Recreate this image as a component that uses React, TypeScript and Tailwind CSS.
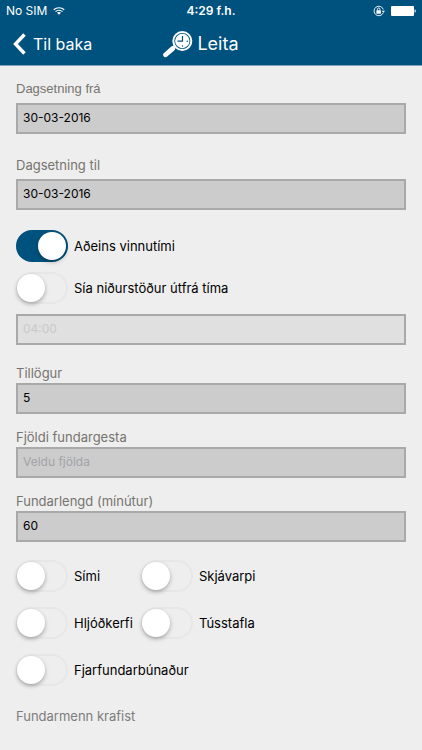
import React, { useState } from 'react';

function WifiIcon() {
  return (
    <svg className="w-3 h-2" viewBox="0 0 24 16" fill="none" stroke="white" strokeWidth="2.4" aria-hidden="true">
      <path d="M1.5 5.5C7.5 .2 16.5 .2 22.5 5.5" />
      <path d="M5 9.3c4-3.6 10-3.6 14 0" />
      <path d="M12 15.5l-4-4c2.2-2 5.8-2 8 0z" fill="white" stroke="none" />
    </svg>
  );
}

function RotationLockIcon() {
  return (
    <svg className="w-3 h-3" viewBox="0 0 24 24" fill="none" stroke="white" aria-hidden="true">
      <path d="M20.5 15.5A9.5 9.5 0 1 1 20.7 9" strokeWidth="1.8" />
      <path d="M17.5 11.5h6.5l-3.2 4.2z" fill="white" stroke="none" />
      <rect x="6.8" y="10.5" width="9" height="7" rx="1" fill="white" stroke="none" />
      <path d="M8.8 11V8.5a2.5 2.5 0 0 1 5 0V11" strokeWidth="1.8" />
    </svg>
  );
}

function BatteryIcon() {
  return (
    <svg className="w-[25px] h-[10px]" viewBox="0 0 25 10" fill="white" aria-hidden="true">
      <rect width="23" height="10" rx="1" />
      <path d="M23.6 3.2c1.6.5 1.6 3.1 0 3.6z" />
    </svg>
  );
}

function SearchClockIcon() {
  return (
    <svg className="w-[30px] h-7" viewBox="0 0 30 28" fill="none" stroke="white" aria-hidden="true">
      <path d="M2.6 24.8L9.6 18.6" strokeWidth="4.8" strokeLinecap="round" />
      <path d="M9 19L12.5 16" strokeWidth="3" />
      <circle cx="19.3" cy="11" r="9" strokeWidth="2" />
      <circle cx="19.3" cy="11" r="7.2" fill="white" stroke="none" />
      <path d="M19.5 6v5.200h-5" stroke="#00527e" strokeWidth="1.200" />
      <g fill="#00527e" stroke="none">
        <circle cx="24.3" cy="11.2" r=".7" />
        <circle cx="19.5" cy="16" r=".7" />
      </g>
    </svg>
  );
}

type FieldProps = {
  id: string;
  label: string;
  value?: string;
  placeholder?: string;
  className?: string;
  labelClassName?: string;
};

function Field({ id, label, value, placeholder, className, labelClassName }: FieldProps) {
  return (
    <div className={`flex flex-col ${className ?? ''}`}>
      <label htmlFor={id} className={`leading-5 text-[#76746f] ${labelClassName ?? 'text-[13px]'}`}>{label}</label>
      <input
        id={id}
        type="text"
        defaultValue={value}
        placeholder={placeholder}
        className="w-full h-[31px] border-2 border-[#a9a9a9] bg-[#ccc] px-[5px] pb-0.5 text-xs text-black placeholder:text-[#a3a3a8] outline-none"
      />
    </div>
  );
}

function Toggle({ label, defaultOn = false }: { label: string; defaultOn?: boolean }) {
  const [on, setOn] = useState(defaultOn);
  return (
    <label className="flex items-center gap-1.5 h-8 text-[13px] text-black whitespace-nowrap cursor-pointer">
      <input
        type="checkbox"
        role="switch"
        checked={on}
        onChange={() => setOn(!on)}
        className="appearance-none shrink-0 w-[52px] h-8 rounded-full border-2 border-[#e7e7e7] bg-[#eee] checked:border-[#00527e] checked:bg-[#00527e] before:block before:size-7 before:-ml-px before:rounded-full before:bg-white before:shadow-[0_2px_4px_rgba(0,0,0,0.3)] checked:before:translate-x-[21px] before:transition-transform cursor-pointer"
      />
      <span className="pt-0.5">{label}</span>
    </label>
  );
}

export default function App() {
  return (
    <div className="min-h-screen bg-[#eee] font-['Inter','Liberation_Sans',sans-serif]">
      <header className="bg-[#00527e] border-b border-[#7fa3ba] text-white">
        <div className="grid grid-cols-3 items-center h-[22px] px-1.5 text-xs">
          <div className="flex items-center gap-1.5">
            <span>No SIM</span>
            <WifiIcon />
          </div>
          <span className="text-center font-semibold">4:29 f.h.</span>
          <div className="flex items-center justify-end gap-1.5">
            <RotationLockIcon />
            <BatteryIcon />
          </div>
        </div>
        <div className="grid grid-cols-[1fr_auto_1fr] items-center h-[43px] px-3">
          <button type="button" className="flex items-center gap-1.5 justify-self-start text-base cursor-pointer">
            <svg className="w-[15px] h-[22px]" viewBox="0 0 15 22" fill="none" stroke="white" strokeWidth="3.4" aria-hidden="true">
              <path d="M12.500 1.500L3.500 11L12.500 20.500" />
            </svg>
            Til baka
          </button>
          <h1 className="flex items-center gap-1 pr-5 text-lg">
            <SearchClockIcon />
            Leita
          </h1>
        </div>
      </header>

      <form className="px-4 pt-[13px] pb-6">
        <Field id="from" label="Dagsetning frá" value="30-03-2016" className="gap-1" labelClassName="text-[13px] font-['Liberation_Sans',sans-serif]" />
        <Field id="to" label="Dagsetning til" value="30-03-2016" className="gap-1 mt-[21px]" />

        <div className="flex flex-col gap-2.5 mt-5">
          <Toggle label="Aðeins vinnutími" defaultOn />
          <Toggle label="Sía niðurstöður útfrá tíma" />
          <input
            type="text"
            disabled
            aria-label="Tími"
            defaultValue="04:00"
            className="w-full h-[31px] border-2 border-[#a9a9a9] bg-[#e0e0e0] px-[5px] pb-0.5 text-xs text-[#c9c9cb]"
          />
        </div>

        <div className="flex flex-col gap-[13px] mt-[18px]">
          <Field id="suggestions" label="Tillögur" value="5" />
          <Field id="guests" label="Fjöldi fundargesta" placeholder="Veldu fjölda" />
          <Field id="length" label="Fundarlengd (mínútur)" value="60" />
        </div>

        <div className="grid grid-cols-[125px_1fr] gap-y-[15px] mt-[18px]">
          <Toggle label="Sími" />
          <Toggle label="Skjávarpi" />
          <Toggle label="Hljóðkerfi" />
          <Toggle label="Tússtafla" />
          <div className="col-span-2">
            <Toggle label="Fjarfundarbúnaður" />
          </div>
        </div>

        <h2 className="mt-5 text-[13px] leading-5 text-[#7d7d7d]">Fundarmenn krafist</h2>
      </form>
    </div>
  );
}
